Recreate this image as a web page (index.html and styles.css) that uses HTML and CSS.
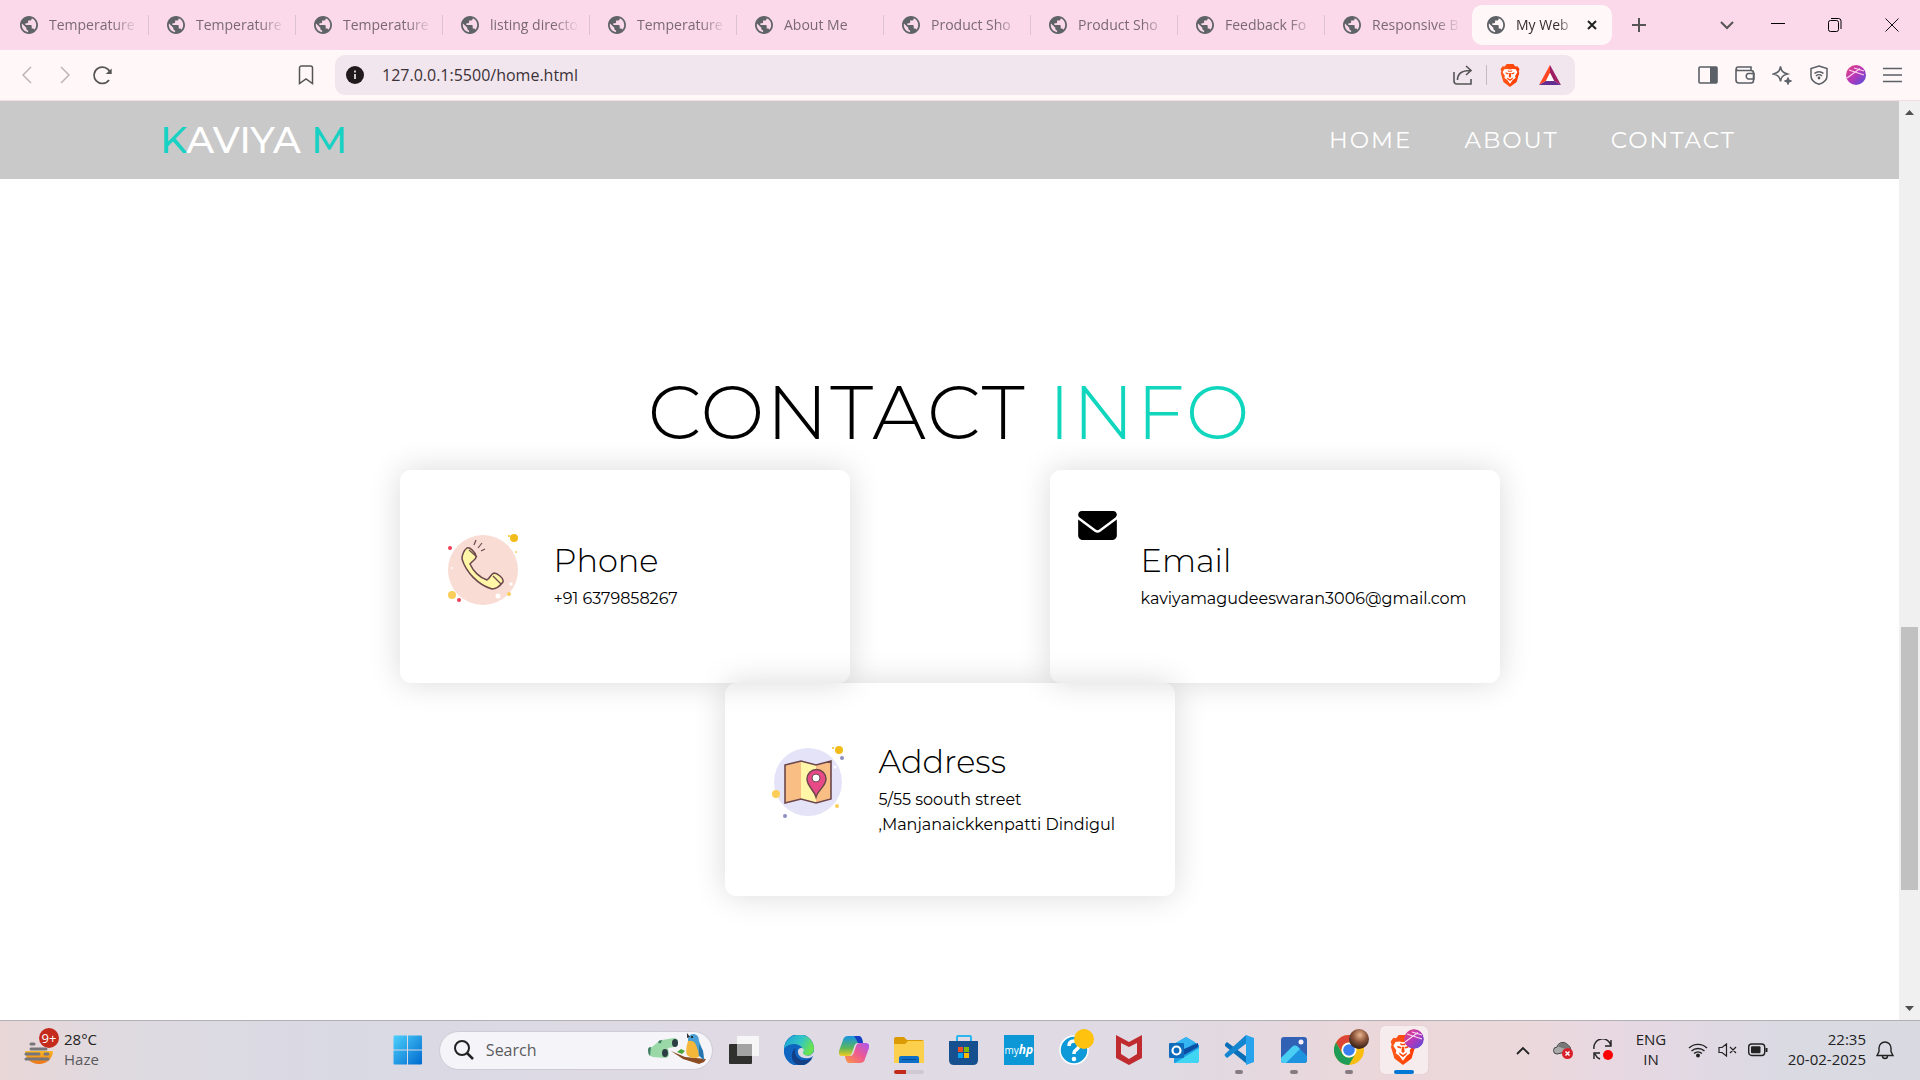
FILE: index.html
```html
<!DOCTYPE html>
<html lang="en">
<head>
<meta charset="utf-8">
<title>My Website</title>
<link rel="stylesheet" href="styles.css">
</head>
<body>
<svg class="defs" aria-hidden="true">
  <defs>
    <symbol id="globe" viewBox="2 2 20 20"><path fill="currentColor" d="M12 2C6.48 2 2 6.48 2 12s4.48 10 10 10 10-4.48 10-10S17.52 2 12 2zm-1 17.93c-3.95-.49-7-3.85-7-7.93 0-.62.08-1.21.21-1.79L9 15v1c0 1.1.9 2 2 2v1.93zm6.9-2.54c-.26-.81-1-1.39-1.9-1.39h-1v-3c0-.55-.45-1-1-1H8v-2h2c.55 0 1-.45 1-1V7h2c1.1 0 2-.9 2-2v-.41c2.93 1.19 5 4.06 5 7.41 0 2.08-.8 3.97-2.1 5.39z"/></symbol>
    <linearGradient id="avatarFill" x1="0" y1="0" x2="1" y2="1"><stop offset="0" stop-color="#e8447c"/><stop offset=".5" stop-color="#b637b8"/><stop offset="1" stop-color="#4a4fe0"/></linearGradient>
    <symbol id="avatar" viewBox="0 0 20 20"><circle cx="10" cy="10" r="10" fill="url(#avatarFill)"/><path d="M1 13 14 3.500M3 5l15 5M8 3l10 3" fill="none" stroke="#fbd5f0" stroke-width="1.100"/></symbol>
    <linearGradient id="lionFill" x1="0" y1="0" x2="1" y2="0"><stop offset="0" stop-color="#ff5a1c"/><stop offset="1" stop-color="#ff3a00"/></linearGradient>
    <symbol id="lion" viewBox="0 0 24 28"><path fill="url(#lionFill)" d="M8 0h8l2.500 3L21 2.600 23.500 6 22.600 9l.7 2-3.300 11-8 6-8-6L.7 11l.7-2L.500 6 3 2.600 5.500 3z"/><path fill="#fff" d="M5 6.500 8.500 6l3.500.8 3.500-.8L19 6.500l2 3.500-2.800 4.500.6 2.500-3.300 2.300L12 24l-3.500-4.700L5.200 17l.6-2.500L3 10z"/><path fill="#ff4a0c" d="m6.500 10 4 1.200-.5 1.500-3-.8zm11 0-4 1.200.5 1.500 3-.8zM11 11h2l.5 4.500L12 17l-1.500-1.500zM8 16l4 2.700L16 16l-1 2.500-3 2.200-3-2.200zM9 7.500l3 1 3-1-1 2h-4z"/></symbol>
  </defs>
</svg>

<header class="browser">
  <div class="tabstrip">
    <nav class="tabs" aria-label="Open tabs">
      <button class="tab"><svg class="favicon"><use href="#globe"/></svg><span class="tab-label">Temperature</span></button>
      <button class="tab"><svg class="favicon"><use href="#globe"/></svg><span class="tab-label">Temperature</span></button>
      <button class="tab"><svg class="favicon"><use href="#globe"/></svg><span class="tab-label">Temperature</span></button>
      <button class="tab"><svg class="favicon"><use href="#globe"/></svg><span class="tab-label">listing directo</span></button>
      <button class="tab"><svg class="favicon"><use href="#globe"/></svg><span class="tab-label">Temperature</span></button>
      <button class="tab"><svg class="favicon"><use href="#globe"/></svg><span class="tab-label">About Me</span></button>
      <button class="tab"><svg class="favicon"><use href="#globe"/></svg><span class="tab-label">Product Sho</span></button>
      <button class="tab"><svg class="favicon"><use href="#globe"/></svg><span class="tab-label">Product Sho</span></button>
      <button class="tab"><svg class="favicon"><use href="#globe"/></svg><span class="tab-label">Feedback Fo</span></button>
      <button class="tab tab-last"><svg class="favicon"><use href="#globe"/></svg><span class="tab-label">Responsive B</span></button>
      <button class="tab tab-active"><svg class="favicon"><use href="#globe"/></svg><span class="tab-label">My Web</span><svg class="tab-close" viewBox="0 0 10 10"><path d="m1 1 8 8M9 1 1 9" stroke="#222" stroke-width="2"/></svg></button>
    </nav>
    <button class="icon-btn new-tab" aria-label="New tab"><svg width="14" height="14" viewBox="0 0 14 14"><path d="M7 0v14M0 7h14" stroke="#555" stroke-width="2"/></svg></button>
    <div class="window-controls">
      <button class="icon-btn tab-search" aria-label="Search tabs"><svg width="14" height="9" viewBox="0 0 14 9"><path d="m1 1 6 6 6-6" fill="none" stroke="#555" stroke-width="2"/></svg></button>
      <button class="icon-btn" aria-label="Minimize"><svg width="14" height="14" viewBox="0 0 14 14"><path d="M0 5.500h14" stroke="#000" stroke-width="1"/></svg></button>
      <button class="icon-btn" aria-label="Restore"><svg width="14" height="14" viewBox="0 0 14 14"><path d="M3 .5h7.500a2.500 2.500 0 0 1 2.500 2.500V11" fill="none" stroke="#000"/><rect x=".5" y="2.500" width="10" height="11" rx="2" fill="none" stroke="#000"/></svg></button>
      <button class="icon-btn" aria-label="Close"><svg width="14" height="14" viewBox="0 0 14 14"><path d="m.5.5 13 13m0-13-13 13" stroke="#111"/></svg></button>
    </div>
  </div>

  <div class="toolbar">
    <div class="tool-group">
      <button class="icon-btn" aria-label="Back"><svg width="10" height="18" viewBox="0 0 10 18"><path d="M9 1 1 9l8 8" fill="none" stroke="#bbb3b5" stroke-width="1.500"/></svg></button>
      <button class="icon-btn" aria-label="Forward"><svg width="10" height="18" viewBox="0 0 10 18"><path d="m1 1 8 8-8 8" fill="none" stroke="#bbb3b5" stroke-width="1.500"/></svg></button>
      <button class="icon-btn" aria-label="Reload"><svg width="20" height="20" viewBox="0 0 20 20"><path d="M16 15a8.200 8.200 0 1 1 1-7.500" fill="none" stroke="#555" stroke-width="1.700"/><path d="M18.700 3.500V9h-6z" fill="#555"/></svg></button>
    </div>
    <button class="icon-btn bookmark" aria-label="Bookmark"><svg width="16" height="20" viewBox="0 0 16 20"><path d="M1.500 18V3A2 2 0 0 1 3.500 1h9a2 2 0 0 1 2 2v15.500L8 14l-6.500 4.500z" fill="none" stroke="#555" stroke-width="1.500"/></svg></button>
    <div class="address">
      <svg width="18" height="18" viewBox="0 0 18 18"><circle cx="9" cy="9" r="9" fill="#211a1c"/><path d="M9 8v5M9 4.500v2" stroke="#ddd" stroke-width="1.800"/></svg>
      <input class="url" type="text" aria-label="Address" value="127.0.0.1:5500/home.html">
      <button class="icon-btn" aria-label="Share"><svg width="20" height="20" viewBox="0 0 20 20"><path d="M1 7v9a3 3 0 0 0 3 3h14v-5M4.500 15c0-6 4-9.500 12.500-9.500M13 1l5 4.500-5 4.500" fill="none" stroke="#555" stroke-width="1.600"/></svg></button>
      <span class="divider"></span>
      <button class="icon-btn" aria-label="Shields"><svg width="20" height="23"><use href="#lion"/></svg></button>
      <button class="icon-btn" aria-label="Rewards"><svg width="22" height="20" viewBox="0 0 22 20"><path fill="#ff4724" d="M11 0 0 20l7-4 4-8z"/><path fill="#9e1f63" d="m11 0 11 20-7-4-4-8z"/><path fill="#662d91" d="M0 20h22l-7-4H7z"/><path fill="#fff" d="m11 8 4 8H7z"/></svg></button>
    </div>
    <div class="tool-group tools-right">
      <button class="icon-btn" aria-label="Sidebar"><svg width="20" height="18" viewBox="0 0 20 18"><rect x="1" y="1" width="18" height="16" rx="1" fill="none" stroke="#5b5f66" stroke-width="1.600"/><path d="M12 1h7v16h-7z" fill="#5b5f66"/></svg></button>
      <button class="icon-btn" aria-label="Wallet"><svg width="20" height="18" viewBox="0 0 20 18"><path d="M1 3v11a3 3 0 0 0 3 3h12a2.500 2.500 0 0 0 2.500-2.500V7A2.500 2.500 0 0 0 16 4.500H3A1.700 1.700 0 0 1 3 1h13v3.500M19 7.500h-6a3 3 0 0 0 0 5.500h6z" fill="none" stroke="#5b5f66" stroke-width="1.600"/></svg></button>
      <button class="icon-btn" aria-label="Assistant"><svg width="20" height="20" viewBox="0 0 20 20"><path d="M8.500 1.500c.8 4.500 2 6 7 7.500-5 1.300-6.200 2.700-7 7.500-.8-4.800-2-6.200-7-7.500 5-1.500 6.200-3 7-7.500z" fill="none" stroke="#5b5f66" stroke-width="1.500"/><path d="m16 12.500 1 2.500 2.500 1-2.500 1-1 2.500-1-2.500-2.500-1 2.500-1z" fill="#5b5f66" stroke="#5b5f66"/></svg></button>
      <button class="icon-btn" aria-label="VPN"><svg width="18" height="20" viewBox="0 0 18 20"><path d="m9 1 8 2.500V11c0 4-4 7-8 8.200C5 18 1 15 1 11V3.500z" fill="none" stroke="#5b5f66" stroke-width="1.500"/><path d="M4.500 8.500a6.500 6.500 0 0 1 9 0M6 11a4.300 4.300 0 0 1 6 0" fill="none" stroke="#5b5f66" stroke-width="1.500"/><circle cx="9" cy="13" r="1.400" fill="#5b5f66"/></svg></button>
      <button class="icon-btn" aria-label="Profile"><svg width="20" height="20"><use href="#avatar"/></svg></button>
      <button class="icon-btn" aria-label="Menu"><svg width="19" height="16" viewBox="0 0 19 16"><path d="M0 1.500h19M0 8h19M0 14.500h19" stroke="#5b5f66" stroke-width="1.500"/></svg></button>
    </div>
  </div>
</header>

<div class="viewport">
  <div class="site">
    <header class="site-header">
      <a class="logo" href="#"><span class="accent">K</span>AVIYA <span class="accent">M</span></a>
      <nav class="site-nav"><a href="#">HOME</a><a href="#">ABOUT</a><a href="#">CONTACT</a></nav>
    </header>
    <main class="contact">
      <h1 class="title">CONTACT <span class="title-accent">INFO</span></h1>
      <div class="cards">
        <section class="card">
          <svg class="card-icon" viewBox="0 0 72 72"><circle cx="36" cy="37" r="35" fill="#f9dcd3"/><circle cx="67" cy="5" r="4" fill="#f1bc19"/><circle cx="62" cy="3" r="1" fill="#f1bc19"/><circle cx="3" cy="15" r="2" fill="#ee3e54"/><circle cx="69" cy="19" r="1" fill="#fbcd59"/><circle cx="5" cy="62" r="4" fill="#fbcd59"/><circle cx="12" cy="67" r="2" fill="#ee3e54"/><circle cx="51" cy="63" r="2.500" fill="#fff"/><circle cx="64" cy="51" r="1.700" fill="#fff"/><circle cx="62" cy="61" r="2" fill="#fbcd59"/><circle cx="5" cy="35" r="1" fill="#fff"/><path d="M20 15c-3 2-5 7-5 11 4 13 16 26 30 30 5 0 8-3 11-7 1-4-6-9-9-9-3 1-4 5-7 7-7-2-14-9-17-16 2-3 7-5 6-8-1-4-6-9-9-8z" fill="#fff6a8" stroke="#6b474c" stroke-width="1.500"/><path d="m22 17 8 7M46 43l8 8M27 12l2-5m2 8 4-5m-1 8 4-2" fill="none" stroke="#6b474c" stroke-width="1.200"/></svg>
          <div class="card-text"><h2>Phone</h2><p>+91 6379858267</p></div>
        </section>
        <section class="card card-compact">
          <svg class="card-glyph" viewBox="0 64 512 384"><path d="M48 64C21.500 64 0 85.500 0 112c0 15.100 7.100 29.300 19.200 38.400L236.800 313.600c11.400 8.500 27 8.500 38.400 0L492.800 150.400c12.100-9.100 19.200-23.300 19.200-38.400c0-26.500-21.500-48-48-48H48zM0 176V384c0 35.300 28.700 64 64 64H448c35.300 0 64-28.700 64-64V176L294.400 339.200c-22.800 17.100-54 17.100-76.800 0L0 176z"/></svg>
          <div class="card-text"><h2>Email</h2><p>kaviyamagudeeswaran3006@gmail.com</p></div>
        </section>
        <section class="card">
          <svg class="card-icon" viewBox="0 0 72 72"><circle cx="36" cy="36" r="34" fill="#e4e3f8"/><circle cx="67" cy="4" r="4" fill="#f1bc19"/><circle cx="61" cy="2" r="1" fill="#f1bc19"/><circle cx="70" cy="12" r="2" fill="#8d8fc0"/><circle cx="4" cy="48" r="4" fill="#fbcd59"/><circle cx="13" cy="70" r="2" fill="#8d8fc0"/><circle cx="65" cy="60" r="2" fill="#fbcd59"/><circle cx="63" cy="21" r="1.500" fill="#fff"/><path d="m13 19 16-4v38l-16 4zM44 19l15-4v38l-15 4z" fill="#f9be84"/><path d="m29 15 15 4v38l-15-4z" fill="#fff6a8"/><path d="m13 19 16-4 15 4 15-4v38l-15 4-15-4-16 4z" fill="none" stroke="#6b474c" stroke-width="1.600"/><path d="M44 51c-2-7-9-11-9-18a9 9 0 0 1 19 0c0 7-8 11-10 18z" fill="#e84a87" stroke="#6b474c" stroke-width="1.500"/><circle cx="44" cy="32" r="4" fill="#fff" stroke="#6b474c"/></svg>
          <div class="card-text"><h2>Address</h2><p>5/55 soouth street ,Manjanaickkenpatti Dindigul</p></div>
        </section>
      </div>
    </main>
  </div>
  <div class="scrollbar" aria-hidden="true">
    <svg width="9" height="5" viewBox="0 0 9 5"><path d="m0 5 4.500-5L9 5z" fill="#505050"/></svg>
    <div class="track"><div class="thumb"></div></div>
    <svg width="9" height="5" viewBox="0 0 9 5"><path d="m0 0 4.500 5L9 0z" fill="#505050"/></svg>
  </div>
</div>

<footer class="taskbar">
  <button class="weather">
    <svg width="32" height="32" viewBox="0 0 32 32"><defs><linearGradient id="sun" x1="0" y1="0" x2="0" y2="1"><stop offset="0" stop-color="#f9b929"/><stop offset="1" stop-color="#ee7414"/></linearGradient></defs><path d="M1 17a14 13 0 0 0 28 0z" fill="url(#sun)"/><path d="M7 10h3M7 15h15M2 20h13m6 0h3M2 25h22" stroke="#77777b" stroke-width="3" stroke-linecap="round"/></svg>
    <span class="badge">9+</span>
    <span class="weather-text"><span>28°C</span><span class="muted">Haze</span></span>
  </button>

  <div class="apps">
    <button class="app" aria-label="Start"><svg viewBox="0 0 30 30"><defs><linearGradient id="win" x1="0" y1="0" x2="1" y2="1"><stop offset="0" stop-color="#4cd0fb"/><stop offset="1" stop-color="#0069cf"/></linearGradient></defs><path fill="url(#win)" d="M1.500.5H14v14H.5v-13a1 1 0 0 1 1-1zM15 .5h13a1 1 0 0 1 1 1v13H15zM.5 15.500H14v14H1.500a1 1 0 0 1-1-1zM15 15.500h14v13a1 1 0 0 1-1 1H15z"/></svg></button>
    <label class="search">
      <svg width="20" height="20" viewBox="0 0 20 20"><circle cx="8" cy="8" r="7" fill="none" stroke="#222" stroke-width="2"/><path d="m13 13 6 6" stroke="#222" stroke-width="2.500"/></svg>
      <input type="search" placeholder="Search" aria-label="Search">
      <svg class="doodle" width="60" height="34" viewBox="0 0 60 34"><path d="M1 17q0-3 4-3l6-5q1-2 4-2l12-2q4 0 4 4t-4 5l-6 1 1 6q0 4-4 4l-12-1q-5-1-5-7z" fill="#9bd8a8"/><path d="M1 17q0-3 3-3l-1 9q-2-2-2-6zM11 9q1-2 4-2l-1 3q-2 1-3-1z" fill="#3f7d63"/><ellipse cx="18" cy="20" rx="3" ry="4" fill="#2c3d44"/><ellipse cx="28" cy="10" rx="3" ry="4" fill="#2c3d44"/><path d="m24 18 14 6 21 2-2 3-5 2-16-5z" fill="#8a4b22"/><path d="m30 19 4-3 4 2-3 3z" fill="#4ca53a"/><path d="M41 6q1-5 6-5 5 1 5 7l4 10 1 9-5-4h-8q-4-3-3-11z" fill="#4a9fd4"/><path d="M41 8q6-1 8 4 3 6 3 12-7 3-12-2-2-4 1-14z" fill="#f4b73a"/><path d="m40 0 3 4-3 1z" fill="#333"/><circle cx="45" cy="4" r="1" fill="#111"/><path d="m52 11 4 7 1 9-5-5z" fill="#2574ad"/></svg>
    </label>
    <button class="app" aria-label="Task view"><svg viewBox="0 0 30 30"><rect x="0" y="9" width="23" height="20" rx="1" fill="#30302f"/><rect x="8" y="1" width="22" height="20" rx="1" fill="#f6f6f7"/><path d="M8 9h15v12H8z" fill="#a3a3a3"/></svg></button>
    <button class="app" aria-label="Edge"><svg viewBox="0 0 30 30"><defs><linearGradient id="edgeA" x1="0" y1="0" x2="1" y2=".4"><stop offset="0" stop-color="#169fd9"/><stop offset=".6" stop-color="#34c6c4"/><stop offset="1" stop-color="#69e251"/></linearGradient></defs><path d="M0 14a15 15 0 0 1 30 0q0 6-6 6 3 1 5 1A15 15 0 0 1 0 14z" fill="#0f65c0"/><path d="M0 14C2-5 28-5 30 13c0 7-6 9-11 7-2-1-1-2 0-4 0-5-5-7-9-7-5 0-9 3-10 5z" fill="url(#edgeA)"/><path d="M12 13c-3 5 1 12 8 12 3 0 6-1 8-2-4 8-14 9-18 4-4-5-2-12 2-14z" fill="#123f86"/><path d="M18 13q3 1 1 4c-1 3 5 5 10 3l-1 2c-7 3-14 0-14-5 0-3 1-4 4-4z" fill="#dcd9e3"/></svg></button>
    <button class="app" aria-label="Copilot"><svg viewBox="0 0 30 30"><defs><linearGradient id="cpA" x1="0" y1="0" x2="0" y2="1"><stop offset="0" stop-color="#1794e6"/><stop offset=".6" stop-color="#5bb65a"/><stop offset="1" stop-color="#f4cb20"/></linearGradient><linearGradient id="cpB" x1="1" y1="0" x2="0" y2="1"><stop offset="0" stop-color="#a956f0"/><stop offset=".5" stop-color="#ef5a90"/><stop offset="1" stop-color="#fb9a3e"/></linearGradient></defs><path d="M9 1h11q3 0 4 7h-5q-3 0-4 4l-2 6q-1 3-4 3H3q-4 0-3-5L4 5q1-4 5-4z" fill="url(#cpA)"/><path d="M15 1h5q3 0 4 7h-5q-3-6-4-7z" fill="#163fc4"/><path d="M21 28H10q-3 0-4-7h5q3 0 4-4l2-6q1-3 4-3h6q4 0 3 5l-4 11q-1 4-5 4z" fill="url(#cpB)"/></svg></button>
    <button class="app" aria-label="File Explorer"><svg viewBox="0 0 30 30"><path d="M0 4q0-2 2-2h8l3 3h15q2 0 2 2v8H0z" fill="#dc9a05"/><path d="M0 9h11l3-3h16v22H0z" fill="#fcd04c"/><path d="M5 28v-5q0-2 2-2h16q2 0 2 2v5z" fill="#0d6fc6"/><path d="M8 24.500h14" stroke="#0a4d95"/></svg><span class="progress"></span></button>
    <button class="app" aria-label="Store"><svg viewBox="0 0 30 30"><path d="M8 7V2q0-1 1-1h12q1 0 1 1v5" fill="none" stroke="#2cb4ee" stroke-width="2"/><path d="M0 6h29v19q0 5-5 5H5q-5 0-5-5z" fill="#16508f"/><path fill="#f25022" d="M9 12h5v5H9z"/><path fill="#7fba00" d="M15 12h5v5h-5z"/><path fill="#00a4ef" d="M9 18h5v5H9z"/><path fill="#ffb900" d="M15 18h5v5h-5z"/></svg></button>
    <button class="app" aria-label="myHP"><span class="myhp">my<i>hp</i></span></button>
    <button class="app" aria-label="HP Support"><svg viewBox="0 0 30 30"><circle cx="15" cy="15" r="14" fill="#0e9ad8" stroke="#fff" stroke-width="1.500"/><path d="M10 11q0-5 5-5t5 4q0 3-3 5-2 1-2 4" fill="none" stroke="#fff" stroke-width="3.500"/><circle cx="15" cy="24" r="2.300" fill="#fff"/></svg><span class="dot"></span></button>
    <button class="app" aria-label="McAfee"><svg viewBox="0 0 30 30"><path d="m2 0 13 7L28 0v23l-13 7-13-7z" fill="#c02b30"/><path d="m7 8 8 4 8-4v11l-8 5-8-5z" fill="#e2dae1"/></svg></button>
    <button class="app" aria-label="Outlook"><svg viewBox="0 0 30 30"><path d="M5 9 17 2l13 8v15q0 3-3 3H5z" fill="#1b9de2"/><path d="m5 9 12-7 9 5-11 9z" fill="#35b5f1"/><path d="m15 14 14-6v4L15 20z" fill="#0a4da2"/><path d="m6 28 24-15v12q0 3-3 3z" fill="#3fd5f3"/><rect y="8" width="15" height="15" rx="1" fill="#0f6cbd"/><circle cx="7.500" cy="15.500" r="4" fill="none" stroke="#fff" stroke-width="2.200"/></svg></button>
    <button class="app" aria-label="VS Code"><svg viewBox="0 0 30 30"><path d="m1 9 2-2 20 15v7L1 11z" fill="#0a6fb8"/><path d="M1 21q-1-1 0-2L22 0l1 8L3 23z" fill="#1485cf"/><path d="m22 0 8 3v24l-8 3z" fill="#28a4ef"/></svg><span class="running"></span></button>
    <button class="app" aria-label="Photos"><svg viewBox="0 0 30 30"><rect x="2" y="2" width="26" height="26" rx="3" fill="#3161b4"/><path d="M2 23 14 11q2-1 4 0l10 10v4q0 3-3 3H5q-3 0-3-3z" fill="#1e94e0"/><path d="m2 23 12-12q2-1 4 0l3 3L7 28H5q-3 0-3-3z" fill="#49cdf2"/><circle cx="22" cy="7" r="2.500" fill="#f4eefb"/></svg><span class="running"></span></button>
    <button class="app" aria-label="Chrome"><svg viewBox="0 0 30 30"><circle cx="15" cy="15" r="15" fill="#f9bd0f"/><path d="M2 7.500A15 15 0 0 1 28 7.500H15A7.500 7.500 0 0 0 8 18z" fill="#dc4437"/><path d="M2 7.500A15 15 0 0 0 15 30l6.500-11.500A7.500 7.500 0 0 1 8.500 19z" fill="#1f9d58"/><circle cx="15" cy="15" r="7.500" fill="#fff"/><circle cx="15" cy="15" r="5.800" fill="#3a7ff0"/></svg><span class="dot dot-photo"></span><span class="running"></span></button>
    <button class="app app-active" aria-label="Brave"><svg viewBox="0 0 30 30"><use href="#lion" width="26" height="30" x="1"/></svg><svg class="dot dot-avatar"><use href="#avatar"/></svg><span class="running running-active"></span></button>
  </div>

  <div class="tray">
    <button class="tray-btn" aria-label="Hidden icons"><svg width="14" height="9" viewBox="0 0 14 9"><path d="m1 8 6-6 6 6" fill="none" stroke="#222" stroke-width="1.800"/></svg></button>
    <button class="tray-btn" aria-label="OneDrive"><svg width="20" height="18" viewBox="0 0 20 18"><path d="M4 13a3.500 3.500 0 0 1 0-7 6 6 0 0 1 10-3q4 2 4 7z" fill="#a9a9a9" stroke="#444"/><path d="M5 5.500a6 6 0 0 1 9-2.500q3 2 3.500 5-7 0-12.500-2.500z" fill="#777"/><circle cx="14.500" cy="12.500" r="5.500" fill="#d9212c"/><path d="m12.500 10.500 4 4m0-4-4 4" stroke="#fff" stroke-width="1.500"/></svg></button>
    <button class="tray-btn" aria-label="Update"><svg width="22" height="22" viewBox="0 0 22 22"><path d="M2 10a8.500 8.500 0 0 1 17-3M19 1v6h-6M8 20a9 9 0 0 1-5-5M2 20v-6h6" fill="none" stroke="#222" stroke-width="1.400"/><circle cx="16" cy="16" r="5" fill="#f00"/></svg></button>
    <button class="lang"><span>ENG</span><span>IN</span></button>
    <button class="quick" aria-label="Network, sound and battery">
      <svg width="20" height="16" viewBox="0 0 20 16"><path d="M1 6a13 13 0 0 1 18 0M3.500 9a9.500 9.500 0 0 1 13 0M6 11.500a6 6 0 0 1 8 0" fill="none" stroke="#222" stroke-width="1.400"/><circle cx="10" cy="13.500" r="2" fill="#222"/></svg>
      <svg width="20" height="16" viewBox="0 0 20 16"><path d="M1 5.500h3L8.500 2v12L4 10.500H1zM12 5l6 6m0-6-6 6" fill="none" stroke="#222" stroke-width="1.200"/></svg>
      <svg width="20" height="14" viewBox="0 0 20 14"><rect x=".7" y="1" width="16" height="11.500" rx="3" fill="none" stroke="#222" stroke-width="1.400"/><rect x="3" y="3.300" width="9.500" height="7" rx="1" fill="#222"/><path d="M18.500 5v4" stroke="#222" stroke-width="2"/></svg>
    </button>
    <button class="clock"><span>22:35</span><span>20-02-2025</span></button>
    <button class="tray-btn bell" aria-label="Notifications"><svg width="18" height="20" viewBox="0 0 18 20"><path d="M1 15.500h16l-2-4V8A6 6 0 0 0 3 8v3.500zM6.500 16a2.500 2.500 0 0 0 5 0" fill="none" stroke="#222" stroke-width="1.400"/></svg></button>
  </div>
</footer>
</body>
</html>
```

FILE: styles.css
```css
* { box-sizing: border-box; }

body {
  margin: 0;
  min-height: 100vh;
  display: flex;
  flex-direction: column;
  font-family: "Segoe UI", "Open Sans", "Noto Sans", sans-serif;
  background: #fff;
}

button {
  border: 0;
  padding: 0;
  background: none;
  font: inherit;
  color: inherit;
}

svg { display: block; flex: none; }
h1, h2, p { margin: 0; font-weight: inherit; }
.defs { position: absolute; width: 0; height: 0; }

/* Browser window */
.tabstrip {
  height: 50px;
  display: flex;
  align-items: center;
  padding-left: 2px;
  background: #fbd9ea;
}

.tabs { display: flex; align-items: center; min-width: 0; }

.tab {
  flex: 0 1 147px;
  width: 147px;
  min-width: 0;
  height: 20px;
  display: flex;
  align-items: center;
  gap: 11px;
  padding: 0 8px 0 18px;
  border-right: 1px solid #dcc3cf;
  font-size: 14px;
  line-height: 20px;
  color: #7a6973;
}

.tab-last { border-right-color: transparent; }
.favicon { width: 18px; height: 18px; color: #5f6368; }

.tab-label {
  flex: 1;
  min-width: 0;
  overflow: hidden;
  white-space: nowrap;
  text-align: left;
  -webkit-mask-image: linear-gradient(90deg, #000 70%, transparent 98%);
  mask-image: linear-gradient(90deg, #000 70%, transparent 98%);
}

.tab-active {
  flex-basis: 140px;
  height: 40px;
  padding: 0 15px;
  border: 0;
  border-radius: 10px;
  background: #fff7f8;
  color: #352d31;
}

.tab-close { width: 10px; height: 10px; }

.icon-btn { display: grid; place-items: center; width: 38px; height: 38px; flex: none; }
.new-tab { margin-left: 8px; }
.window-controls { display: flex; margin-left: auto; }
.window-controls .icon-btn { width: 57px; }
.window-controls .tab-search { width: 45px; }

.toolbar {
  height: 51px;
  display: flex;
  align-items: center;
  padding: 0 9px 0 8px;
  background: #fff7f8;
  border-bottom: 1px solid #f3dce4;
}

.tool-group { display: flex; }
.bookmark { margin-left: 165px; }

.address {
  flex: 1;
  height: 40px;
  display: flex;
  align-items: center;
  margin-left: 10px;
  padding: 0 5px 0 11px;
  border-radius: 10px;
  background: #f1e5ee;
}

.url {
  flex: 1;
  min-width: 0;
  margin-left: 18px;
  padding: 0;
  border: 0;
  background: none;
  font: inherit;
  font-size: 16px;
  color: #3b3237;
}

.divider { width: 1px; height: 20px; margin: 0 3px; background: #c4b9c2; }
.tools-right { margin-left: 114px; }
.tools-right .icon-btn { width: 37px; }
.address .icon-btn { width: 40px; }

/* Web page */
.viewport { flex: 1; display: flex; }

.site {
  flex: 1;
  font-family: Montserrat, Inter, "Open Sans", sans-serif;
  color: #000;
}

.site-header {
  display: flex;
  align-items: center;
  justify-content: space-between;
  min-height: 78px;
  padding: 0 163px 0 160px;
  background: #c9c9c9;
}

.site-header a { color: #fff; text-decoration: none; }
.logo { font-size: 38px; font-weight: 500; line-height: 48px; }
.logo .accent { color: #17d1c2; }
.site-nav { display: flex; gap: 52px; font-size: 23px; line-height: 32px; letter-spacing: 2px; }

.contact { padding: 180px 0 124px; }

.title {
  margin-bottom: 5px;
  font-size: 76px;
  font-weight: 300;
  line-height: 106px;
  letter-spacing: 2px;
  text-align: center;
}

.title-accent { color: #10d6bd; }

.cards {
  display: flex;
  flex-wrap: wrap;
  justify-content: space-around;
  max-width: 1300px;
  margin: 0 auto;
}

.card {
  width: 450px;
  min-height: 213px;
  display: flex;
  align-items: center;
  gap: 35px;
  padding: 0 28px 0 47px;
  border-radius: 11px;
  box-shadow: 0 0 32px rgba(0, 0, 0, 0.15);
}

.card-compact { padding-left: 28px; gap: 24px; }
.card-icon { width: 72px; height: 72px; margin-bottom: 15px; }
.card-glyph { width: 39px; height: 29px; align-self: flex-start; margin-top: 41px; }
.card-text { flex: 1; min-width: 0; padding-bottom: 1px; }
.card h2 { font-size: 32px; font-weight: 300; line-height: 40px; margin-bottom: 5px; }
.card p { font-size: 16px; line-height: 25px; }

.scrollbar {
  width: 21px;
  display: flex;
  flex-direction: column;
  align-items: center;
  gap: 9px;
  padding: 9px 0;
  background: #f0f0f0;
}

.track { flex: 1; padding-top: 503px; }
.thumb { width: 17px; height: 263px; background: #c1c1c1; }

/* Taskbar */
.taskbar {
  height: 60px;
  display: flex;
  align-items: center;
  padding-bottom: 1px;
  border-top: 1px solid #b3b0b5;
  background: linear-gradient(90deg, #e9d6d7, #dedae0 6%, #d9d9e4 18%, #dfdae3 38%, #dfdae3 60%, #ebd7da 72%, #ebd8da 79%, #e6d8e3 85%, #dadae3 93%, #d8d9e1);
  font-size: 15px;
  line-height: 20px;
  color: #222;
}

.weather {
  position: relative;
  display: flex;
  align-items: center;
  gap: 8px;
  margin-left: 24px;
}

.weather-text, .lang, .clock { display: flex; flex-direction: column; padding-bottom: 3px; }
.weather-text { text-align: left; }
.muted { color: #59595c; }

.badge {
  position: absolute;
  left: 15px;
  top: -1px;
  width: 20px;
  height: 20px;
  border-radius: 50%;
  background: #c42b1c;
  color: #fff;
  font-size: 13px;
  line-height: 20px;
  text-align: center;
}

.apps { display: flex; align-items: center; margin-left: 285px; gap: 7px; }

.app {
  position: relative;
  width: 48px;
  height: 48px;
  display: grid;
  place-items: center;
  border-radius: 5px;
}

.app svg { width: 30px; height: 30px; }
.app-active { background: #f6ecee; box-shadow: 0 0 1px #c9b9bd; }

.search {
  width: 274px;
  height: 39px;
  display: flex;
  align-items: center;
  gap: 12px;
  padding: 0 5px 0 14px;
  border: 1px solid #cfcbd6;
  border-radius: 20px;
  background: #f5f4f8;
}

.search input {
  flex: 1;
  min-width: 0;
  padding: 0;
  border: 0;
  background: none;
  font: inherit;
  font-size: 16px;
}

.search input::placeholder { color: #5b5b5f; opacity: 1; }

.myhp {
  width: 30px;
  height: 30px;
  background: #0c98d7;
  color: #fff;
  font-size: 10px;
  line-height: 29px;
}

.myhp i { font-size: 12px; font-weight: 700; }

.app .dot {
  position: absolute;
  right: 4px;
  top: 3px;
  width: 20px;
  height: 20px;
  border-radius: 50%;
  background: #ffc20e;
}

.app .dot-photo { background: radial-gradient(circle at 55% 30%, #e9b58f, #8a5339 40%, #2a1a15 80%); }
.app .dot-avatar { background: none; }

.running {
  position: absolute;
  bottom: 0;
  left: 20px;
  width: 8px;
  height: 4px;
  border-radius: 2px;
  background: #857b80;
}

.running-active { left: 14px; width: 20px; background: #0078d4; }

.progress {
  position: absolute;
  bottom: 0;
  left: 9px;
  width: 30px;
  height: 4px;
  border-radius: 2px;
  background: linear-gradient(90deg, #c42b1c 40%, #cfcad1 40%);
}

.tray { display: flex; align-items: center; margin-left: auto; padding-right: 16px; }
.tray-btn { display: grid; place-items: center; width: 40px; height: 48px; }
.lang { width: 56px; align-items: center; }
.quick { display: flex; align-items: center; gap: 10px; margin-left: 9px; }
.clock { width: 98px; align-items: flex-end; }
.bell { width: 38px; }
```
